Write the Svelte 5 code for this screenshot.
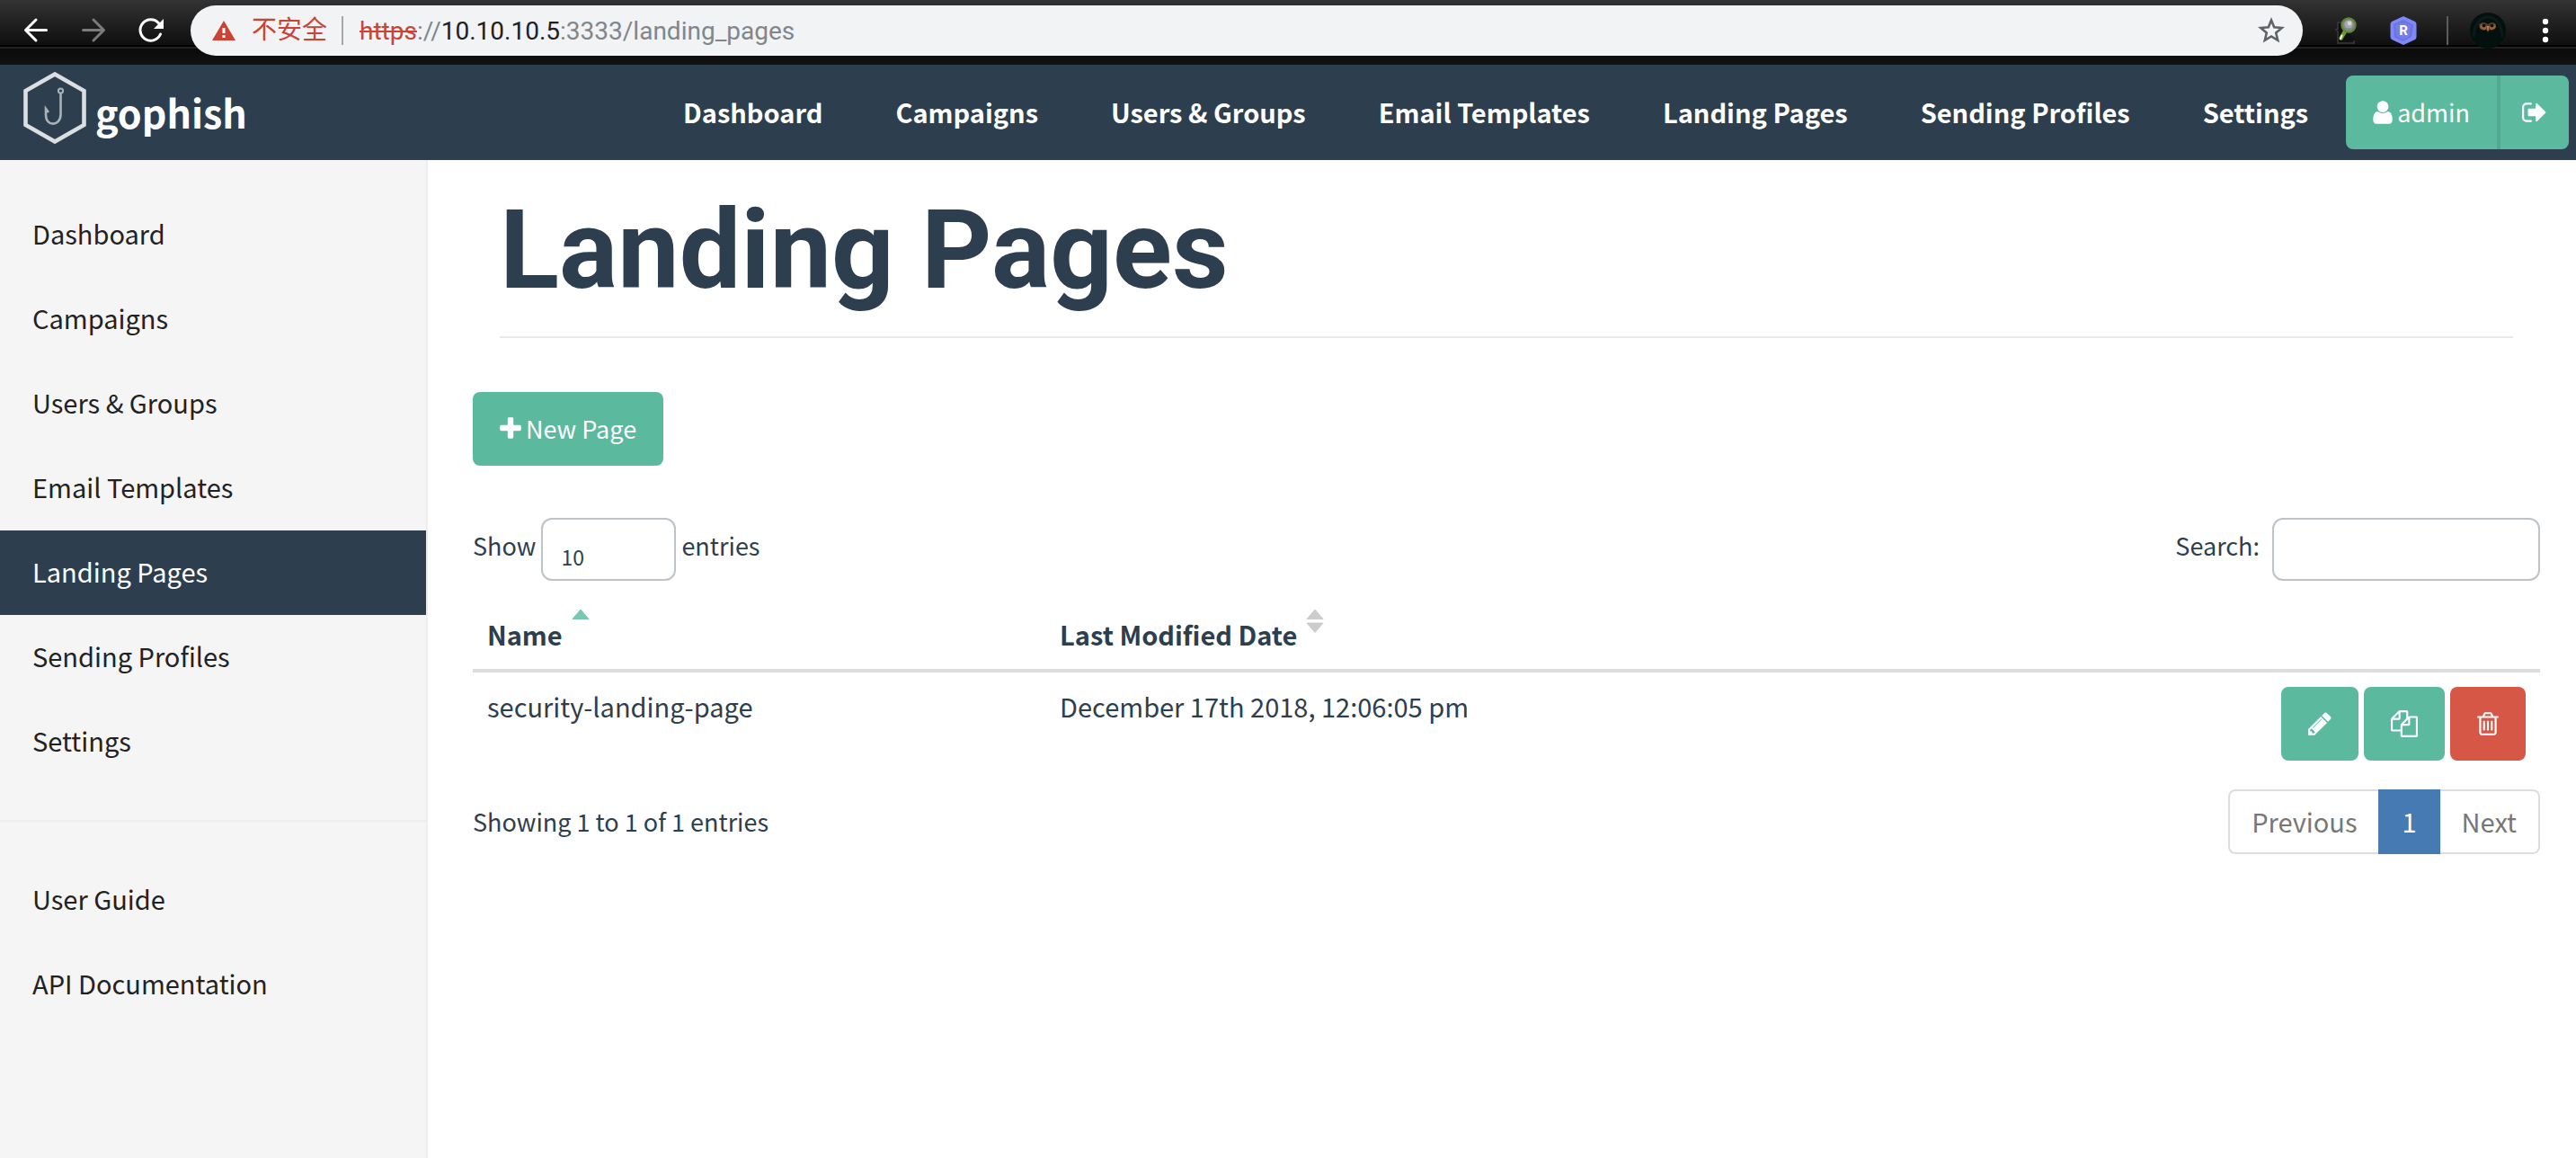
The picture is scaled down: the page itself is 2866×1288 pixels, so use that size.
<script>
  const topLinks = ['Dashboard', 'Campaigns', 'Users & Groups', 'Email Templates', 'Landing Pages', 'Sending Profiles', 'Settings'];
  const helpLinks = ['User Guide', 'API Documentation'];
  const active = 'Landing Pages';
  const pages = [{ name: 'security-landing-page', modified: 'December 17th 2018, 12:06:05 pm' }];

  let search = $state('');
  let pageSize = $state('10');
</script>

<div class="window">
  <div class="toolbar">
    <div class="history">
      <button class="tool" aria-label="Back">
        <svg width="32" height="32" viewBox="0 0 32 32"><path d="M27.500 15.500H5M16 4L4.500 15.500 16 27" fill="none" stroke="#fff" stroke-width="3" stroke-linecap="round" stroke-linejoin="round" /></svg>
      </button>
      <button class="tool" aria-label="Forward">
        <svg width="32" height="32" viewBox="0 0 32 32"><path d="M4.500 15.500H27M16 4L27.500 15.500 16 27" fill="none" stroke="#7b7b7b" stroke-width="3" stroke-linecap="round" stroke-linejoin="round" /></svg>
      </button>
      <button class="tool" aria-label="Reload">
        <svg width="32" height="32" viewBox="0 0 32 32">
          <path d="M24.500 7.700A11.700 11.700 0 1 0 26.500 20" fill="none" stroke="#fff" stroke-width="3" stroke-linecap="round" />
          <path d="M30 3V14H19Z" fill="#fff" />
        </svg>
      </button>
    </div>
    <div class="address">
      <svg class="warn" width="26" height="22" viewBox="0 0 26 22">
        <path d="M13 0L26 22H0Z" fill="#cb4334" />
        <path d="M13 8V14M13 16V19" stroke="#fff" stroke-width="3" />
      </svg>
      <span class="insecure">不安全</span>
      <span class="rule"></span>
      <span class="url"><s>https</s>://<b>10.10.10.5</b>:3333/landing_pages</span>
      <button class="tool star" aria-label="Bookmark this page">
        <svg width="30" height="30" viewBox="0 0 30 30"><path d="M15 3.500L18.200 11.300 26.700 12 20.200 17.500 22.200 25.800 15 21.400 7.800 25.800 9.800 17.500 3.300 12 11.800 11.300Z" fill="none" stroke="#5f6368" stroke-width="2.600" /></svg>
      </button>
    </div>
    <button class="tool" aria-label="Inspector extension">
      <svg width="28" height="32" viewBox="0 0 28 32">
        <path d="M8 7H5V14L3 15 5 17V30H23V27" fill="#101010" stroke="#3a3a3a" stroke-width="1.500" />
        <path d="M13 17L8.500 24.500" stroke="#6f9a35" stroke-width="4.400" stroke-linecap="round" />
        <path d="M9.500 21.500L8 25" stroke="#eef3e6" stroke-width="2" stroke-linecap="round" />
        <circle cx="17" cy="10" r="7.600" fill="#85888d" stroke="#5f8a33" stroke-width="2.200" />
        <circle cx="17" cy="9" r="4.600" fill="#a5a8ad" />
        <circle cx="18" cy="8" r="2.400" fill="#d3d5d8" />
      </svg>
    </button>
    <button class="tool hex" aria-label="R extension">
      <svg width="32" height="32" viewBox="0 0 32 32">
        <path d="M16 0L29 6Q30.500 7 30.500 9V23Q30.500 25 29 26L16 32 3 26Q1.500 25 1.500 23V9Q1.500 7 3 6Z" fill="#7f88f7" />
        <path d="M16 4L27 9.500 25 22.500 16 28 6 23.500 5 9Z" fill="#6a73e0" />
        <path d="M16 7L24 10 23 22 16 26 8 22 7 10Z" fill="#757ee8" />
        <text x="16" y="21" text-anchor="middle" font-size="15" font-weight="700" fill="#fff">R</text>
      </svg>
    </button>
    <span class="divider"></span>
    <button class="tool avatar" aria-label="Profile">
      <svg width="40" height="40" viewBox="0 0 40 40">
        <circle cx="20" cy="20" r="20" fill="#04100d" />
        <path d="M4 27C5 12 12 5 20 5S35 12 36 27" fill="none" stroke="#0b1c18" stroke-width="3" />
        <path d="M10 13Q15 9 20 13 25 9 29 13L28 18Q24 21 22 19L20 22 18 19Q14 21 11 18Z" fill="#5a3b28" />
        <path d="M11 16Q12 12 16 12.500L19 16 17 19Q13 19 11 16ZM29 16Q28 12 24 12.500L21 16 23 19Q27 19 29 16Z" fill="#94683f" />
        <circle cx="15.500" cy="14.500" r="2" fill="#120a06" /><circle cx="24.500" cy="14.500" r="2" fill="#120a06" />
        <path d="M19 15H21L20.500 20H19.500Z" fill="#c48a5a" />
      </svg>
    </button>
    <button class="tool menu" aria-label="Browser menu">
      <svg width="8" height="28" viewBox="0 0 8 28" fill="#fff"><circle cx="4" cy="4" r="3.200" /><circle cx="4" cy="14" r="3.200" /><circle cx="4" cy="24" r="3.200" /></svg>
    </button>
  </div>

  <header>
    <a class="brand" href="#home">
      <svg width="70" height="80" viewBox="0 0 70 80" fill="none">
        <path d="M35 2.500L67.500 21V59L35 77.500 2.500 59V21Z" stroke="#dcdfe2" stroke-width="4.600" />
        <circle cx="41.500" cy="21" r="2.600" stroke="#a9b1b9" stroke-width="2" />
        <path d="M41.500 24V47C41.500 61 25 61 25 48V41L28 45" stroke="#a9b1b9" stroke-width="2.600" />
      </svg>
      <span>gophish</span>
    </a>
    <nav class="main-nav">
      {#each topLinks as link}
        <a href="#{link}">{link}</a>
      {/each}
    </nav>
    <div class="account">
      <button class="btn user">
        <svg width="22" height="30" viewBox="256 0 1280 1792"><path d="M1536 1399q0 109-62.500 187t-150.500 78h-854q-88 0-150.500-78t-62.500-187q0-85 8.500-160.500t31.500-152 58.500-131 94-89 134.500-34.500q131 128 313 128t313-128q76 0 134.500 34.500t94 89 58.500 131 31.500 152 8.500 160.500zm-256-887q0 159-112.500 271.500t-271.500 112.500-271.500-112.500-112.500-271.500 112.500-271.500 271.500-112.500 271.500 112.500 112.500 271.500z" /></svg>
        <span>admin</span>
      </button>
      <button class="btn logout" aria-label="Sign out">
        <svg width="28" height="30" viewBox="64 0 1664 1792"><path d="M704 1440q0 4 1 20t.5 26.500-3 23.500-10 19.500-20.500 6.500h-320q-119 0-203.500-84.500t-84.500-203.500v-704q0-119 84.500-203.500t203.500-84.500h320q13 0 22.500 9.500t9.500 22.500q0 4 1 20t.5 26.500-3 23.500-10 19.500-20.500 6.500h-320q-66 0-113 47t-47 113v704q0 66 47 113t113 47h312l11.500 1 11.500 3 8 5.500 7 9 2 13.500zm928-544q0 26-19 45l-544 544q-19 19-45 19t-45-19-19-45v-288h-448q-26 0-45-19t-19-45v-384q0-26 19-45t45-19h448v-288q0-26 19-45t45-19 45 19l544 544q19 19 19 45z" /></svg>
      </button>
    </div>
  </header>

  <div class="body">
    <aside>
      <nav>
        {#each topLinks as link}
          <a class:active={link === active} href="#{link}">{link}</a>
        {/each}
      </nav>
      <nav class="help">
        {#each helpLinks as link}
          <a href="#{link}">{link}</a>
        {/each}
      </nav>
    </aside>

    <main>
      <h1>Landing Pages</h1>
      <button class="btn new">
        <svg width="24" height="30" viewBox="192 0 1408 1792"><path d="M1600 736v192q0 40-28 68t-68 28h-416v416q0 40-28 68t-68 28h-192q-40 0-68-28t-28-68v-416h-416q-40 0-68-28t-28-68v-192q0-40 28-68t68-28h416v-416q0-40 28-68t68-28h192q40 0 68 28t28 68v416h416q40 0 68 28t28 68z" /></svg>
        <span>New Page</span>
      </button>

      <div class="controls">
        <label><span>Show</span>
          <select bind:value={pageSize}>
            <option>10</option><option>25</option><option>50</option><option>100</option>
          </select>
          <span>entries</span>
        </label>
        <label class="search"><span>Search:</span> <input type="search" bind:value={search} /></label>
      </div>

      <table>
        <thead>
          <tr>
            <th class="name">
              <button class="sort"><span>Name</span>
                <svg width="20" height="28" viewBox="0 0 20 28"><path d="M10 1L19 11.500H1Z" fill="#78c7b0" stroke="#78c7b0" stroke-linejoin="round" /></svg>
              </button>
            </th>
            <th class="date">
              <button class="sort"><span>Last Modified Date</span>
                <svg width="20" height="28" viewBox="0 0 20 28"><path d="M10 1L19 11.500H1ZM1 16H19L10 26.500Z" fill="#ccc" stroke="#ccc" stroke-linejoin="round" /></svg>
              </button>
            </th>
            <th aria-label="Actions"></th>
          </tr>
        </thead>
        <tbody>
          {#each pages as page}
            <tr>
              <td>{page.name}</td>
              <td>{page.modified}</td>
              <td>
                <div class="actions">
                  <button class="btn" aria-label="Edit page">
                    <svg width="26" height="30" viewBox="128 0 1536 1792"><path d="M491 1536l91-91-235-235-91 91v107h128v128h107zm523-928q0-22-22-22-10 0-17 7l-542 542q-7 7-7 17 0 22 22 22 10 0 17-7l542-542q7-7 7-17zm-54-192l416 416-832 832h-416v-416zm683 96q0 53-37 90l-166 166-416-416 166-165q36-38 90-38 53 0 91 38l235 234q37 39 37 91z" /></svg>
                  </button>
                  <button class="btn" aria-label="Copy page">
                    <svg width="30" height="30" viewBox="0 0 1792 1792"><path d="M1696 384q40 0 68 28t28 68v1216q0 40-28 68t-68 28h-960q-40 0-68-28t-28-68v-288h-544q-40 0-68-28t-28-68v-672q0-40 20-88t48-76l408-408q28-28 76-48t88-20h416q40 0 68 28t28 68v328q68-40 128-40h416zm-544 213l-299 299h299v-299zm-640-384l-299 299h299v-299zm196 647l316-316v-416h-384v416q0 40-28 68t-68 28h-416v640h512v-256q0-40 20-88t48-76zm956 804v-1152h-384v416q0 40-28 68t-68 28h-416v640h896z" /></svg>
                  </button>
                  <button class="btn danger" aria-label="Delete page">
                    <svg width="24" height="30" viewBox="192 0 1408 1792"><path d="M704 736v576q0 14-9 23t-23 9h-64q-14 0-23-9t-9-23v-576q0-14 9-23t23-9h64q14 0 23 9t9 23zm256 0v576q0 14-9 23t-23 9h-64q-14 0-23-9t-9-23v-576q0-14 9-23t23-9h64q14 0 23 9t9 23zm256 0v576q0 14-9 23t-23 9h-64q-14 0-23-9t-9-23v-576q0-14 9-23t23-9h64q14 0 23 9t9 23zm128 724v-948h-896v948q0 22 7 40.500t14.500 27 10.500 8.500h832q3 0 10.500-8.500t14.500-27 7-40.500zm-672-1076h448l-48-117q-7-9-17-11h-317q-10 2-17 11zm928 32v64q0 14-9 23t-23 9h-96v948q0 83-47 143.500t-113 60.500h-832q-66 0-113-58.500t-47-141.500v-952h-96q-14 0-23-9t-9-23v-64q0-14 9-23t23-9h309l70-167q15-37 54-63t79-26h320q40 0 79 26t54 63l70 167h309q14 0 23 9t9 23z" /></svg>
                  </button>
                </div>
              </td>
            </tr>
          {/each}
        </tbody>
      </table>

      <div class="footer">
        <span class="info">Showing 1 to 1 of 1 entries</span>
        <nav class="pager" aria-label="Pagination">
          <button>Previous</button>
          <button class="current" aria-current="page">1</button>
          <button>Next</button>
        </nav>
      </div>
    </main>
  </div>
</div>

<style>
  :global(body) {
    margin: 0;
    background: #fff;
  }
  .window {
    min-height: 100vh;
    display: flex;
    flex-direction: column;
    font: 29px/42px "Noto Sans CJK SC", "Noto Sans", sans-serif;
    color: #2d3e4f;
  }
  .window *, .window {
    box-sizing: border-box;
  }
  button, input, select {
    font: inherit;
    color: inherit;
    margin: 0;
  }
  button {
    border: 0;
    padding: 0;
    background: none;
    white-space: nowrap;
    cursor: pointer;
  }
  a {
    color: inherit;
    text-decoration: none;
  }
  svg {
    display: block;
    flex: none;
  }

  .toolbar {
    display: flex;
    align-items: center;
    padding: 6px 30px 10px 24px;
    background: linear-gradient(#333 0, #0f0f0f 50px, #000 50px, #000 52px, #222 52px, #222 54px, #0a0a0a 54px, #121212 100%);
    font-family: Roboto, "Noto Sans CJK SC", sans-serif;
  }
  .history {
    display: flex;
    gap: 32px;
    margin-right: 28px;
  }
  .address {
    flex: 1;
    display: flex;
    align-items: center;
    height: 56px;
    margin-right: 34px;
    padding: 0 20px 0 24px;
    border-radius: 28px;
    background: #f1f3f4;
    font-size: 28px;
    color: #80868b;
    white-space: nowrap;
  }
  .insecure {
    margin-left: 18px;
    color: #cb4334;
  }
  .rule {
    width: 2px;
    height: 32px;
    margin: 0 18px 0 16px;
    background: #a5a8ab;
  }
  s {
    color: #cb4334;
  }
  .url {
    padding-top: 2px;
  }
  .url b {
    font-weight: 400;
    color: #202124;
  }
  .star {
    margin-left: auto;
  }
  .hex {
    margin: 0 32px 0 34px;
  }
  .divider {
    width: 2px;
    height: 32px;
    background: #5c5c5c;
  }
  .avatar {
    margin: 0 40px 0 24px;
  }

  header {
    display: flex;
    align-items: center;
    height: 106px;
    padding: 0 8px 0 26px;
    background: #2d3e4f;
    color: #fff;
    font-weight: 700;
    white-space: nowrap;
  }
  .brand {
    display: flex;
    align-items: center;
    gap: 10px;
    padding-bottom: 10px;
    font-size: 43px;
  }
  .brand span {
    padding-top: 7px;
  }
  .main-nav {
    display: flex;
    gap: 81px;
    margin: 0 42px 0 auto;
    padding-bottom: 3px;
  }
  .account {
    display: flex;
  }

  .btn {
    display: inline-flex;
    align-items: center;
    gap: 5px;
    height: 82px;
    padding: 0 30px;
    border-radius: 8px;
    background: #5bb99e;
    color: #fff;
    fill: #fff;
    font-size: 27px;
    font-weight: 400;
  }
  .user {
    border-right: 4px solid #53a891;
    border-radius: 8px 0 0 8px;
  }
  .logout {
    padding: 0 24px;
    border-radius: 0 8px 8px 0;
  }
  .danger {
    background: #d65746;
  }

  .body {
    flex: 1;
    display: flex;
  }
  aside {
    flex: none;
    width: 476px;
    padding-top: 36px;
    border-right: 2px solid #eee;
    background: #f5f5f5;
    color: #222;
  }
  aside a {
    display: block;
    padding: 24px 36px 28px;
  }
  .active {
    background: #2d3e4f;
    color: #fff;
  }
  .help {
    margin-top: 40px;
    padding-top: 40px;
    border-top: 2px solid #eee;
  }

  main {
    flex: 1;
    padding: 34px 40px 40px 50px;
  }
  h1 {
    margin: 0 30px 60px;
    padding-bottom: 28px;
    border-bottom: 2px solid #e8e8ee;
    font: 700 122px/134px Roboto, sans-serif;
  }
  .controls {
    display: flex;
    justify-content: space-between;
    margin: 58px 0 22px;
  }
  label {
    display: flex;
    gap: 6px;
    font-size: 27px;
    line-height: 62px;
  }
  .search {
    gap: 14px;
  }
  select, input {
    height: 70px;
    border: 2px solid #bdc3c7;
    border-radius: 12px;
    background: #fff;
    outline: 0;
    appearance: none;
  }
  select {
    width: 150px;
    padding: 10px 20px 0;
    font-size: 23px;
  }
  input {
    width: 298px;
    padding: 0 20px;
  }

  table {
    width: 100%;
    border-collapse: separate;
    border-spacing: 0;
    table-layout: fixed;
  }
  .name {
    width: 27.7%;
  }
  .date {
    width: 45%;
  }
  th {
    height: 80px;
    padding: 9px 16px 15px;
    border-bottom: 4px solid #ddd;
    text-align: left;
    vertical-align: top;
  }
  .sort {
    display: flex;
    align-items: flex-start;
    gap: 10px;
    font-weight: 700;
  }
  .sort span {
    padding-top: 7px;
  }
  td {
    padding: 16px;
    vertical-align: top;
  }
  .actions {
    display: flex;
    justify-content: flex-end;
    gap: 6px;
  }
  .footer {
    display: flex;
    align-items: center;
    justify-content: space-between;
    margin-top: 16px;
  }
  .info {
    font-size: 27px;
  }
  .pager {
    display: flex;
    color: #777;
  }
  .pager button {
    height: 72px;
    padding: 0 24px 2px;
    border: 2px solid #ddd;
  }
  .pager button:first-child {
    border-right: 0;
    border-radius: 8px 0 0 8px;
  }
  .pager button:last-child {
    border-left: 0;
    border-radius: 0 8px 8px 0;
  }
  .pager .current {
    border-color: #457ab2;
    background: #457ab2;
    color: #fff;
  }
</style>
